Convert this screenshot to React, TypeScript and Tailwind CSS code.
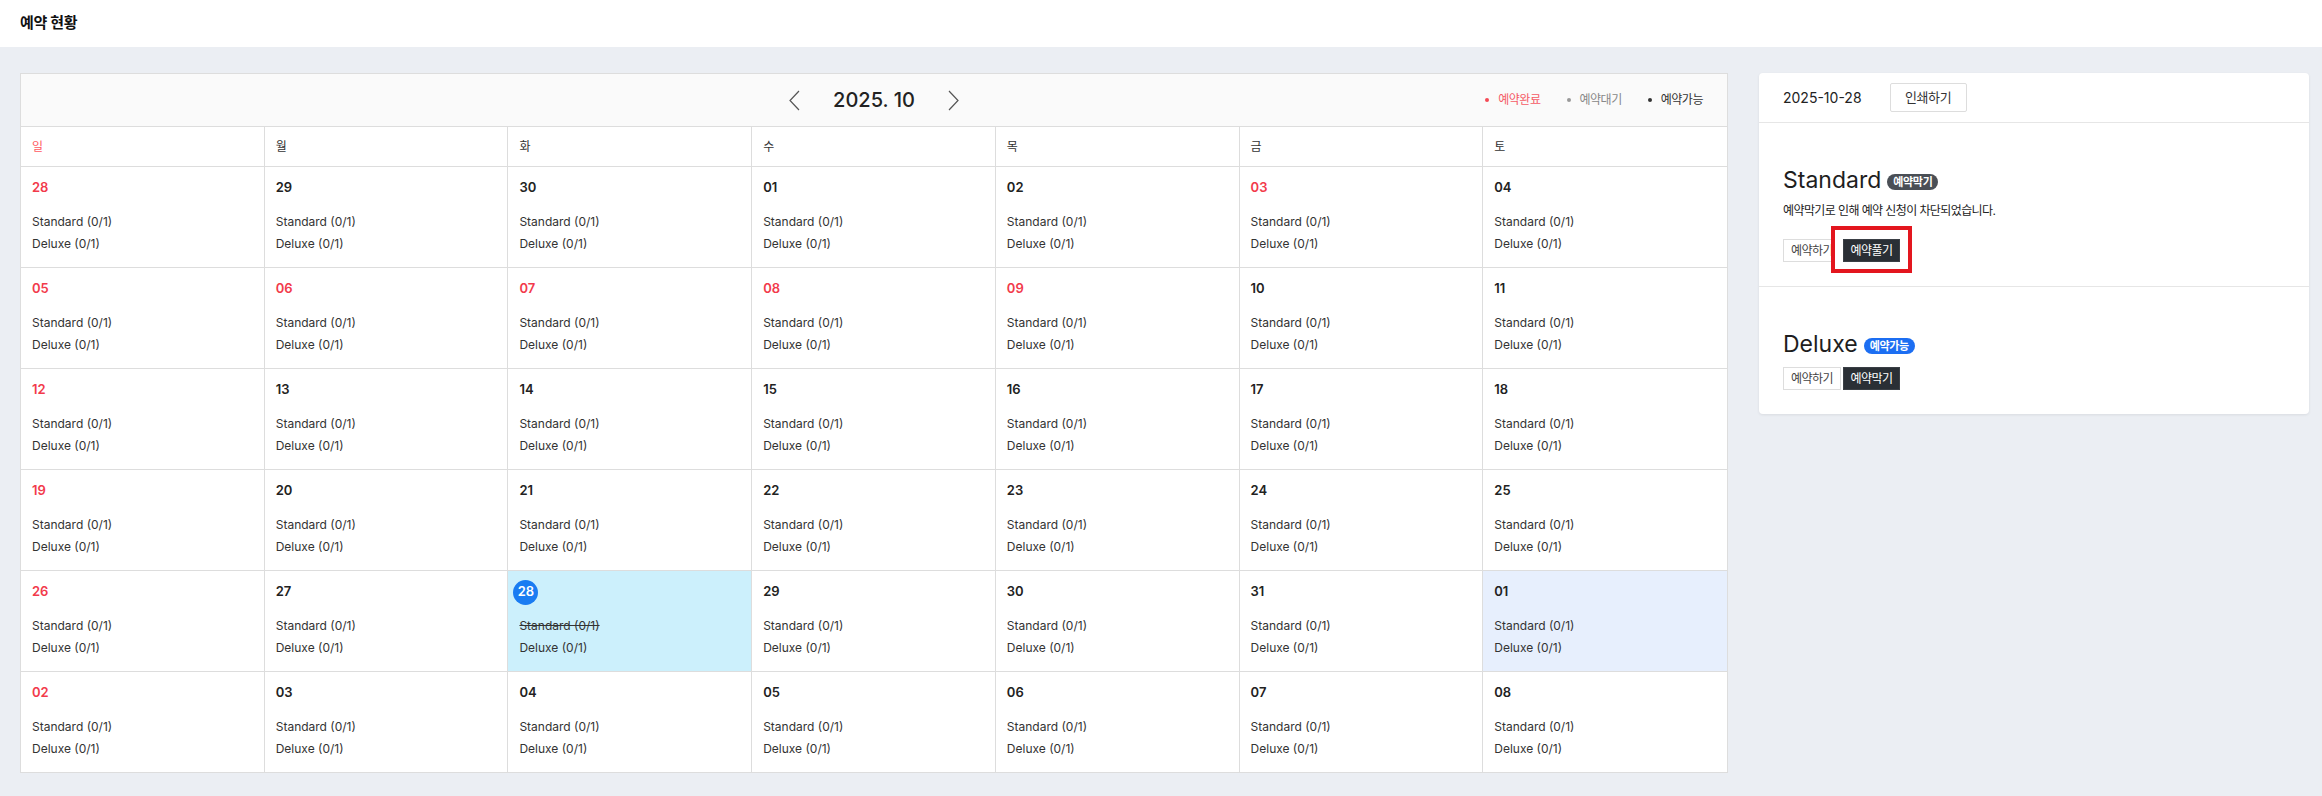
import React from "react";

type Day = { d: string; red?: boolean; today?: boolean; hl?: boolean };

const weeks: Day[][] = [
  [{ d: "28", red: true }, { d: "29" }, { d: "30" }, { d: "01" }, { d: "02" }, { d: "03", red: true }, { d: "04" }],
  [{ d: "05", red: true }, { d: "06", red: true }, { d: "07", red: true }, { d: "08", red: true }, { d: "09", red: true }, { d: "10" }, { d: "11" }],
  [{ d: "12", red: true }, { d: "13" }, { d: "14" }, { d: "15" }, { d: "16" }, { d: "17" }, { d: "18" }],
  [{ d: "19", red: true }, { d: "20" }, { d: "21" }, { d: "22" }, { d: "23" }, { d: "24" }, { d: "25" }],
  [{ d: "26", red: true }, { d: "27" }, { d: "28", today: true }, { d: "29" }, { d: "30" }, { d: "31" }, { d: "01", hl: true }],
  [{ d: "02", red: true }, { d: "03" }, { d: "04" }, { d: "05" }, { d: "06" }, { d: "07" }, { d: "08" }],
];

const weekdays = ["일", "월", "화", "수", "목", "금", "토"];

function Chevron({ dir }: { dir: "l" | "r" }) {
  return (
    <svg width="11" height="21" viewBox="0 0 11 21" fill="none" className="text-[#555]">
      {dir === "l" ? (
        <polyline points="10,1 1,10.5 10,20" stroke="currentColor" strokeWidth="1.2" />
      ) : (
        <polyline points="1,1 10,10.5 1,20" stroke="currentColor" strokeWidth="1.2" />
      )}
    </svg>
  );
}

function Cell({ day, col, last }: { day: Day; col: number; last: boolean }) {
  const bg = day.today ? "bg-[#ccf0fc]" : day.hl ? "bg-[#e7effd]" : "bg-white";
  return (
    <div
      className={`${bg} ${col < 6 ? "border-r" : ""} ${last ? "h-[100px]" : "h-[101px] border-b"} border-[#dddddd] pl-[11px] pt-[12px]`}
    >
      <div className="h-[18px] flex items-center">
        {day.today ? (
          <span className="-ml-[6px] w-[25px] h-[25px] rounded-full bg-[#1a7cf2] text-white text-[13px] font-semibold flex items-center justify-center">
            {day.d}
          </span>
        ) : (
          <span className={`text-[13px] font-semibold ${day.red ? "text-[#f23a4b]" : "text-[#222]"}`}>{day.d}</span>
        )}
      </div>
      <div className="mt-[14px] text-[12px] leading-[22px] text-[#333]">
        <div className={day.today ? "line-through" : ""}>Standard (0/1)</div>
        <div>Deluxe (0/1)</div>
      </div>
    </div>
  );
}

function Section({
  title,
  badge,
  badgeColor,
  message,
  secondLabel,
  highlight,
  bordered,
}: {
  title: string;
  badge: string;
  badgeColor: string;
  message?: string;
  secondLabel: string;
  highlight?: boolean;
  bordered?: boolean;
}) {
  return (
    <div className={`px-6 pt-[43px] pb-[24px] ${bordered ? "border-b border-[#e6e6e6]" : ""}`}>
      <div className="flex items-center h-[28px]">
        <span className="text-[23px] text-[#1e1e1e] leading-[28px]">{title}</span>
        <span
          className={`ml-[6px] mt-[3px] h-[16px] px-[6px] rounded-full ${badgeColor} text-white text-[11px] font-bold leading-[16px] tracking-[-0.03em]`}
        >
          {badge}
        </span>
      </div>
      {message && (
        <div className="mt-[9px] text-[12px] leading-[16px] text-[#222] tracking-[-0.05em]">{message}</div>
      )}
      <div className={`${message ? "mt-[20px]" : "mt-[9px]"} flex items-center`}>
        <button className="w-[58px] h-[23px] border border-[#dddddd] bg-white text-[12px] text-[#444] tracking-[-0.05em] flex items-center justify-center">
          예약하기
        </button>
        <button
          className={`relative z-10 ml-[2px] w-[57px] h-[23px] bg-[#2a2f35] border border-[#3a3f45] text-[12px] text-white tracking-[-0.05em] flex items-center justify-center ${
            highlight ? "shadow-[0_-1px_0_8px_#ffffff,0_-1px_0_12px_#e3161e]" : ""
          }`}
        >
          {secondLabel}
        </button>
      </div>
    </div>
  );
}

export default function App() {
  return (
    <div className="min-h-screen bg-[#ebeef3] font-['Inter','Noto_Sans_CJK_KR',sans-serif]">
      <div className="h-[47px] bg-white flex items-center px-5">
        <h1 className="text-[15px] font-bold text-[#111] tracking-[-0.02em]">예약 현황</h1>
      </div>
      <div className="flex items-start gap-[31px] pl-[20px] pr-[13px] pt-[26px] pb-[24px]">
        {/* Calendar */}
        <div className="flex-1 border border-[#dddddd] bg-white">
          <div className="h-[53px] bg-[#fafafa] border-b border-[#dddddd] grid grid-cols-[1fr_auto_1fr] items-center">
            <div />
            <div className="flex items-center gap-[33px]">
              <Chevron dir="l" />
              <span className="text-[20px] font-medium text-[#222]">2025. 10</span>
              <Chevron dir="r" />
            </div>
            <div className="flex justify-end items-center gap-[26px] pr-[24px] text-[12px] tracking-[-0.04em]">
              <div className="flex items-center gap-[9px] text-[#f55a66]">
                <span className="w-[4px] h-[4px] rounded-full bg-[#f44a55]" />
                예약완료
              </div>
              <div className="flex items-center gap-[9px] text-[#888]">
                <span className="w-[4px] h-[4px] rounded-full bg-[#999]" />
                예약대기
              </div>
              <div className="flex items-center gap-[9px] text-[#333]">
                <span className="w-[4px] h-[4px] rounded-full bg-[#333]" />
                예약가능
              </div>
            </div>
          </div>
          <div className="grid grid-cols-7">
            {weekdays.map((w, i) => (
              <div
                key={w}
                className={`h-[40px] flex items-center pl-[11px] border-b border-[#dddddd] ${i < 6 ? "border-r" : ""} text-[12px] ${
                  i === 0 ? "text-[#ff5a62]" : "text-[#333]"
                }`}
              >
                {w}
              </div>
            ))}
            {weeks.map((wk, r) =>
              wk.map((day, c) => <Cell key={`${r}-${c}`} day={day} col={c} last={r === weeks.length - 1} />)
            )}
          </div>
        </div>

        {/* Side panel */}
        <div className="w-[550px] bg-white rounded-[4px] shadow-[0_1px_3px_rgba(0,0,0,0.08)]">
          <div className="h-[50px] px-6 flex items-center border-b border-[#e6e6e6]">
            <span className="text-[14px] font-normal text-[#222]">2025-10-28</span>
            <button className="ml-[28px] w-[77px] h-[29px] border border-[#dddddd] rounded-[2px] bg-white text-[13px] text-[#333] tracking-[-0.03em] flex items-center justify-center">
              인쇄하기
            </button>
          </div>
          <Section
            title="Standard"
            badge="예약막기"
            badgeColor="bg-[#4a4f56]"
            message="예약막기로 인해 예약 신청이 차단되었습니다."
            secondLabel="예약풀기"
            highlight
            bordered
          />
          <Section title="Deluxe" badge="예약가능" badgeColor="bg-[#1c6ef2]" secondLabel="예약막기" />
        </div>
      </div>
    </div>
  );
}
